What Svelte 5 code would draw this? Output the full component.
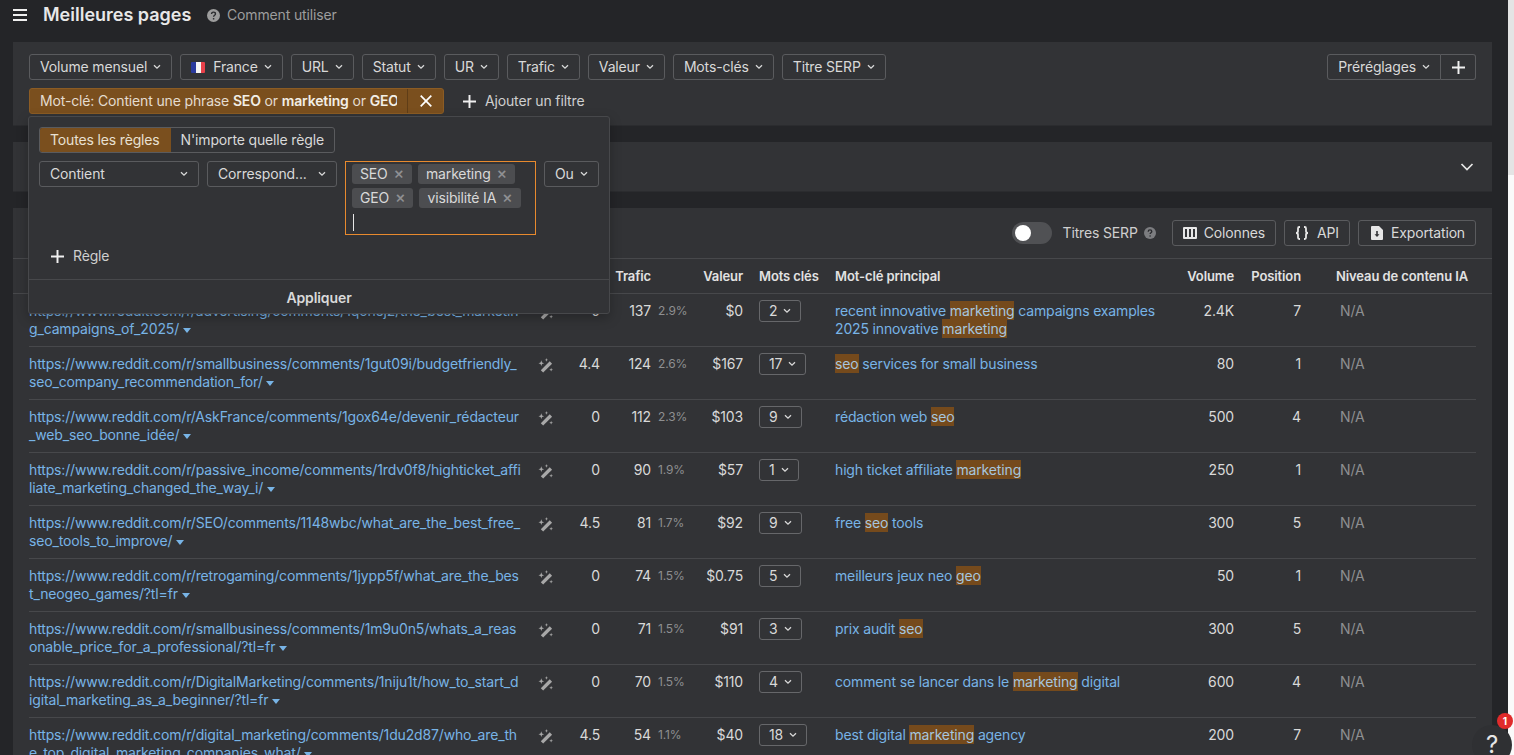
<script>
  const filters = ["Volume mensuel", "France", "URL", "Statut", "UR", "Trafic", "Valeur", "Mots-clés", "Titre SERP"];

  // kw: [text, highlighted] pieces, url lines split the way the page wraps them
  const rows = [
    { url: ["https://www.reddit.com/r/advertising/comments/1qonej2/the_best_marketin", "g_campaigns_of_2025/"], ur: "0", traffic: 137, pct: "2.9%", value: "$0", kws: 2,
      kw: [["recent innovative "], ["marketing", 1], [" campaigns examples 2025 innovative "], ["marketing", 1]], vol: "2.4K", pos: 7 },
    { url: ["https://www.reddit.com/r/smallbusiness/comments/1gut09i/budgetfriendly_", "seo_company_recommendation_for/"], ur: "4.4", traffic: 124, pct: "2.6%", value: "$167", kws: 17,
      kw: [["seo", 1], [" services for small business"]], vol: "80", pos: 1 },
    { url: ["https://www.reddit.com/r/AskFrance/comments/1gox64e/devenir_rédacteur", "_web_seo_bonne_idée/"], ur: "0", traffic: 112, pct: "2.3%", value: "$103", kws: 9,
      kw: [["rédaction web "], ["seo", 1]], vol: "500", pos: 4 },
    { url: ["https://www.reddit.com/r/passive_income/comments/1rdv0f8/highticket_affi", "liate_marketing_changed_the_way_i/"], ur: "0", traffic: 90, pct: "1.9%", value: "$57", kws: 1,
      kw: [["high ticket affiliate "], ["marketing", 1]], vol: "250", pos: 1 },
    { url: ["https://www.reddit.com/r/SEO/comments/1148wbc/what_are_the_best_free_", "seo_tools_to_improve/"], ur: "4.5", traffic: 81, pct: "1.7%", value: "$92", kws: 9,
      kw: [["free "], ["seo", 1], [" tools"]], vol: "300", pos: 5 },
    { url: ["https://www.reddit.com/r/retrogaming/comments/1jypp5f/what_are_the_bes", "t_neogeo_games/?tl=fr"], ur: "0", traffic: 74, pct: "1.5%", value: "$0.75", kws: 5,
      kw: [["meilleurs jeux neo "], ["geo", 1]], vol: "50", pos: 1 },
    { url: ["https://www.reddit.com/r/smallbusiness/comments/1m9u0n5/whats_a_reas", "onable_price_for_a_professional/?tl=fr"], ur: "0", traffic: 71, pct: "1.5%", value: "$91", kws: 3,
      kw: [["prix audit "], ["seo", 1]], vol: "300", pos: 5 },
    { url: ["https://www.reddit.com/r/DigitalMarketing/comments/1niju1t/how_to_start_d", "igital_marketing_as_a_beginner/?tl=fr"], ur: "0", traffic: 70, pct: "1.5%", value: "$110", kws: 4,
      kw: [["comment se lancer dans le "], ["marketing", 1], [" digital"]], vol: "600", pos: 4 },
    { url: ["https://www.reddit.com/r/digital_marketing/comments/1du2d87/who_are_th", "e_top_digital_marketing_companies_what/"], ur: "4.5", traffic: 54, pct: "1.1%", value: "$40", kws: 18,
      kw: [["best digital "], ["marketing", 1], [" agency"]], vol: "200", pos: 7 }
  ];
</script>

{#snippet chev()}
  <svg class="chev" viewBox="0 0 8 6" width="8" height="6"><path d="M1 1.2 4 4.2 7 1.2" fill="none" stroke="currentColor" stroke-width="1.3" /></svg>
{/snippet}

{#snippet plus(size)}
  <svg viewBox="0 0 12 12" width={size} height={size}><path d="M6 0v12M0 6h12" stroke="currentColor" stroke-width="1.8" fill="none" /></svg>
{/snippet}

{#snippet help(size)}
  <svg viewBox="0 0 12 12" width={size} height={size}><circle cx="6" cy="6" r="6" fill="currentColor" /><path d="M4.2 4.7c0-1.100.8-1.800 1.800-1.800s1.800.7 1.800 1.600c0 1.300-1.700 1.300-1.700 2.600" fill="none" stroke="#2a2b2e" stroke-width="1.300" /><circle cx="6.100" cy="9" r=".8" fill="#2a2b2e" /></svg>
{/snippet}

<div class="page">
  <div class="main">
    <header>
      <svg class="burger" viewBox="0 0 14 12" width="14" height="12"><path d="M0 1h14M0 6h14M0 11h14" stroke="#f0f0f0" stroke-width="2" /></svg>
      <h1>Meilleures pages</h1>
      <span class="howto">
        <span class="howto-icon">{@render help(13)}</span>
        Comment utiliser
      </span>
    </header>

    <section class="panel filters">
      <div class="filter-row">
        {#each filters as f}
          <button class="btn">
            {#if f === "France"}
              <span class="flag"><i></i><i></i><i></i></span>
            {/if}
            {f}
            {@render chev()}
          </button>
        {/each}
        <div class="presets">
          <button class="btn left">Préréglages {@render chev()}</button>
          <button class="btn right">{@render plus(13)}</button>
        </div>
      </div>
      <div class="filter-row second">
        <div class="chip">
          <span class="chip-label">Mot-clé: Contient une phrase <b>SEO</b> or <b>marketing</b> or <b>GEO</b> or <b>visibilité IA</b></span>
          <span class="chip-x">
            <svg viewBox="0 0 12 12" width="12" height="12"><path d="M.7.7l10.600 10.600M11.300.7.7 11.300" stroke="#fff" stroke-width="1.700" /></svg>
          </span>
        </div>
        <span class="add">{@render plus(13)} Ajouter un filtre</span>
      </div>

      <div class="popup">
        <div class="tabs">
          <span class="tab on">Toutes les règles</span>
          <span class="tab">N'importe quelle règle</span>
        </div>
        <div class="rule">
          <button class="btn sel contains">Contient {@render chev()}</button>
          <button class="btn sel match">Correspond... {@render chev()}</button>
          <div class="tagbox">
            <span class="tag">SEO <em>×</em></span>
            <span class="tag">marketing <em>×</em></span>
            <span class="tag">GEO <em>×</em></span>
            <span class="tag">visibilité IA <em>×</em></span>
            <span class="tag-input"><span class="caret"></span></span>
          </div>
          <button class="btn sel ou">Ou {@render chev()}</button>
        </div>
        <div class="add-rule">{@render plus(13)} Règle</div>
        <div class="apply">Appliquer</div>
      </div>
    </section>

    <section class="panel collapsed">
      <svg viewBox="0 0 14 8" width="14" height="8"><path d="M1.500 1 7 6.500 12.500 1" fill="none" stroke="#e6e6e6" stroke-width="1.700" /></svg>
    </section>

    <section class="panel results">
      <div class="toolbar">
        <span class="toggle"><i></i></span>
        <span class="serp">Titres SERP</span>
        <span class="serp-help">{@render help(12)}</span>
        <button class="btn tool first">
          <svg viewBox="0 0 14 12" width="14" height="12"><path fill-rule="evenodd" d="M1 0h12a1 1 0 0 1 1 1v10a1 1 0 0 1-1 1H1a1 1 0 0 1-1-1V1a1 1 0 0 1 1-1zm1 2v8h2V2zm4 0v8h2V2zm4 0v8h2V2z" fill="#e6e6e6" /></svg>
          Colonnes
        </button>
        <button class="btn tool">
          <svg viewBox="0 0 14 14" width="14" height="14"><path d="M5 1H4.300C3.300 1 3 1.600 3 2.500v2.800C3 6.300 2.300 7 1 7c1.300 0 2 .7 2 1.700v2.800c0 .9.3 1.500 1.300 1.500H5M9 1h.7c1 0 1.300.6 1.300 1.500v2.800c0 1 .7 1.700 2 1.700-1.300 0-2 .7-2 1.700v2.800c0 .9-.3 1.500-1.300 1.500H9" fill="none" stroke="#e6e6e6" stroke-width="1.800" /></svg>
          API
        </button>
        <button class="btn tool export">
          <svg viewBox="0 0 12 14" width="12" height="14"><path fill-rule="evenodd" d="M1 0h7l4 4v9a1 1 0 0 1-1 1H1a1 1 0 0 1-1-1V1a1 1 0 0 1 1-1zm4.200 5v3.200H3.500L6 11l2.500-2.800H6.800V5z" fill="#e6e6e6" /></svg>
          Exportation
        </button>
      </div>

      <div class="grid head">
        <span>URL</span>
        <span></span>
        <span class="r">UR</span>
        <span class="r">Trafic</span>
        <span></span>
        <span class="r">Valeur</span>
        <span class="kws">Mots clés</span>
        <span>Mot-clé principal</span>
        <span class="r">Volume</span>
        <span class="r">Position</span>
        <span class="ai">Niveau de contenu IA</span>
      </div>

      <div class="rows">
        {#each rows as row}
          <div class="grid row">
            <a class="url" href="#top">
              {row.url[0]}<br />{row.url[1]}
              <svg class="tri" viewBox="0 0 8 5" width="8" height="5"><path d="M0 0h8L4 5z" fill="currentColor" /></svg>
            </a>
            <span class="wand">
              <svg viewBox="0 0 16 16" width="15" height="15">
                <path d="M12.500 3.500 15 6 5.500 15.500 3 13z" fill="#a8a8a8" />
                <path d="M3.500 2.500l.8 2.200 2.200.8-2.200.8-.8 2.200-.8-2.200-2.200-.8 2.200-.8zM9 0l.5 1.500 1.500.5-1.500.5L9 4l-.5-1.500L7 2l1.500-.5zM14 10.500l.5 1.500 1.500.5-1.500.5-.5 1.500-.5-1.500-1.500-.5 1.500-.5z" fill="#a8a8a8" />
              </svg>
            </span>
            <span class="r">{row.ur}</span>
            <span class="r">{row.traffic}</span>
            <span class="pct">{row.pct}</span>
            <span class="r">{row.value}</span>
            <span class="kws"><span class="count">{row.kws} {@render chev()}</span></span>
            <span class="kw">
              {#each row.kw as part}
                {#if part[1]}<mark>{part[0]}</mark>{:else}{part[0]}{/if}
              {/each}
            </span>
            <span class="r">{row.vol}</span>
            <span class="r">{row.pos}</span>
            <span class="na">N/A</span>
          </div>
        {/each}
      </div>
    </section>
  </div>
  <div class="scrollbar"></div>

  <div class="bubble">
    ?
    <span class="badge">1</span>
  </div>
</div>

<style>
  :global(body) {
    margin: 0;
    overflow: hidden;
    background: #242528;
  }
  .page {
    display: flex;
    position: relative;
    height: 755px;
    overflow: hidden;
    font-family: Inter, "Liberation Sans", sans-serif;
    font-size: 14px;
    line-height: 18px;
    letter-spacing: -0.15px;
    color: #d9d9d9;
  }
  .main {
    flex: 1;
    min-width: 0;
    padding: 0 16px 0 13px;
    overflow: hidden;
  }
  .scrollbar {
    width: 6px;
    background: linear-gradient(#e4e4e4 175px, #fafafa 175px);
  }
  header {
    height: 42px;
    box-sizing: border-box;
    display: flex;
    align-items: flex-start;
    padding-top: 6px;
  }
  .burger {
    margin-top: 3px;
    margin-right: 16px;
  }
  h1 {
    margin: 0;
    font-size: 18px;
    font-weight: 600;
    line-height: 18px;
    letter-spacing: 0;
    color: #e8e8e8;
    width: 164px;
  }
  .howto {
    display: inline-flex;
    align-items: center;
    gap: 7px;
    color: #9d9d9d;
  }
  .howto-icon {
    display: inline-flex;
  }
  .panel {
    background: #323336;
    border-bottom: 1px solid #2b2c2f;
    box-sizing: border-box;
  }
  .filters {
    height: 84px;
    padding: 12px 16px 0;
    position: relative;
  }
  .filter-row {
    display: flex;
    gap: 8px;
    align-items: center;
  }
  .second {
    margin-top: 8px;
  }
  .btn {
    height: 26px;
    box-sizing: border-box;
    display: inline-flex;
    align-items: center;
    gap: 6px;
    padding: 0 10px;
    background: transparent;
    border: 1px solid #5a5b5e;
    border-radius: 3px;
    font: inherit;
    letter-spacing: inherit;
    color: #d9d9d9;
    white-space: nowrap;
  }
  .chev {
    flex: none;
  }
  .flag {
    display: inline-flex;
    width: 14px;
    height: 11px;
    margin-right: 2px;
    border-radius: 1px;
    overflow: hidden;
  }
  .flag i {
    flex: 1;
    background: #f5f5f5;
  }
  .flag i:first-child {
    background: #2a3a9e;
  }
  .flag i:last-child {
    background: #e8404a;
  }
  .presets {
    margin-left: auto;
    display: flex;
  }
  .left {
    border-radius: 3px 0 0 3px;
  }
  .right {
    border-radius: 0 3px 3px 0;
    border-left: 0;
    width: 35px;
    justify-content: center;
    color: #f0f0f0;
  }
  .chip {
    width: 415px;
    height: 26px;
    box-sizing: border-box;
    display: flex;
    background: #7a4f1e;
    border: 1px solid #8c5c24;
    border-radius: 3px;
    color: #e4dccf;
  }
  .chip b {
    font-weight: 600;
    color: #f2eee6;
  }
  .chip-label {
    flex: 1;
    min-width: 0;
    margin: 0 10px;
    line-height: 24px;
    white-space: nowrap;
    overflow: hidden;
  }
  .chip-x {
    flex: none;
    width: 35px;
    display: flex;
    align-items: center;
    justify-content: center;
    border-left: 1px solid #5f3d17;
  }
  .add {
    margin-left: 11px;
    display: inline-flex;
    align-items: center;
    gap: 9px;
    color: #cfcfcf;
  }
  .add svg {
    color: #f0f0f0;
  }
  .popup {
    position: absolute;
    left: 15px;
    top: 74px;
    z-index: 5;
    width: 582px;
    height: 198px;
    box-sizing: border-box;
    background: #323336;
    border: 1px solid #47484b;
    border-radius: 3px;
    box-shadow: 0 4px 12px rgba(0, 0, 0, 0.25);
    padding: 10px 10px 0;
  }
  .tabs {
    display: flex;
    width: 296px;
    height: 26px;
    box-sizing: border-box;
    border: 1px solid #5a5b5e;
    border-radius: 3px;
    overflow: hidden;
  }
  .tab {
    padding: 0 10px;
    line-height: 24px;
    white-space: nowrap;
  }
  .tab.on {
    padding-right: 11px;
    background: #7a4f1e;
    color: #e8e0d2;
  }
  .rule {
    display: flex;
    gap: 8px;
    align-items: flex-start;
    margin-top: 8px;
  }
  .sel {
    justify-content: space-between;
  }
  .contains {
    width: 160px;
  }
  .match {
    width: 130px;
  }
  .ou {
    width: 55px;
  }
  .tagbox {
    width: 191px;
    height: 74px;
    box-sizing: border-box;
    border: 1px solid #e88a2e;
    padding: 2px 6px;
    display: flex;
    flex-wrap: wrap;
    align-content: flex-start;
    gap: 4px 6px;
  }
  .tag {
    height: 20px;
    line-height: 20px;
    padding: 0 8px;
    background: #4c4d50;
    border-radius: 3px;
    white-space: nowrap;
  }
  .tag em {
    font-style: normal;
    font-size: 16px;
    line-height: 1;
    font-weight: 500;
    color: #8f9093;
    margin-left: 2px;
  }
  .tag-input {
    flex: 0 0 100%;
    display: flex;
    padding: 2px 0 0 1px;
  }
  .caret {
    width: 1px;
    height: 17px;
    background: #e6e6e6;
  }
  .add-rule {
    position: absolute;
    left: 22px;
    top: 130px;
    display: flex;
    align-items: center;
    gap: 9px;
    color: #cfcfcf;
  }
  .add-rule svg {
    color: #f0f0f0;
  }
  .apply {
    position: absolute;
    left: 0;
    right: 0;
    bottom: 0;
    height: 33px;
    line-height: 35px;
    text-align: center;
    font-weight: 600;
    letter-spacing: -0.1px;
    border-top: 1px solid #47484b;
  }
  .collapsed {
    height: 50px;
    margin-top: 16px;
    display: flex;
    align-items: center;
    justify-content: flex-end;
    padding-right: 18px;
  }
  .results {
    margin-top: 16px;
    height: 560px;
    border-bottom: 0;
  }
  .toolbar {
    height: 51px;
    box-sizing: border-box;
    border-bottom: 1px solid #47484b;
    display: flex;
    align-items: center;
    justify-content: flex-end;
    padding: 0 16px;
    gap: 8px;
  }
  .toggle {
    width: 40px;
    height: 22px;
    border-radius: 11px;
    background: #505154;
    display: flex;
    align-items: center;
    padding-left: 3px;
    box-sizing: border-box;
    margin-right: 3px;
  }
  .toggle i {
    width: 16px;
    height: 16px;
    border-radius: 50%;
    background: #fff;
  }
  .serp {
    color: #cfcfcf;
    margin-right: -2px;
  }
  .serp-help {
    display: inline-flex;
    color: #7c7d80;
  }
  .tool {
    gap: 8px;
  }
  .tool.first {
    margin-left: 8px;
    gap: 7px;
  }
  .tool.export {
    padding-left: 12px;
  }
  .grid {
    display: grid;
    grid-template-columns: 493px 48px 30px 51px 52px 40px 92px 339px 60px 67px 175px;
    margin: 0 16px;
  }
  .head {
    height: 35px;
    margin: 0;
    padding: 0 16px;
    align-items: center;
    font-size: 13px;
    font-weight: 600;
    letter-spacing: -0.1px;
    color: #e2e2e2;
    border-bottom: 1px solid #47484b;
    box-sizing: border-box;
    white-space: nowrap;
  }
  .row {
    height: 53px;
    box-sizing: border-box;
    padding: 8px 0 0;
    border-bottom: 1px solid #47484b;
    align-items: start;
  }
  .r {
    text-align: right;
  }
  .url {
    color: #78b4e6;
    text-decoration: none;
    white-space: nowrap;
  }
  .tri {
    vertical-align: 1px;
  }
  .wand {
    display: flex;
    justify-content: center;
    padding-top: 3px;
    padding-right: 1px;
  }
  .pct {
    padding-left: 7px;
    font-size: 12px;
    color: #8e8f91;
  }
  .kws {
    padding-left: 16px;
  }
  .count {
    display: inline-flex;
    align-items: center;
    gap: 6px;
    height: 22px;
    margin-top: -2px;
    padding: 0 9px;
    box-sizing: border-box;
    border: 1px solid #66676a;
    border-radius: 3px;
  }
  .kw {
    color: #78b4e6;
  }
  mark {
    background: #754a1c;
    color: #a6c6df;
    padding: 1px 0;
  }
  .ai {
    padding-left: 35px;
  }
  .na {
    padding-left: 39px;
    color: #8e8f91;
  }
  .bubble {
    position: absolute;
    left: 1472px;
    top: 725px;
    width: 40px;
    height: 40px;
    border-radius: 50%;
    background: #2f3033;
    display: flex;
    align-items: center;
    justify-content: center;
    font-size: 24px;
    color: #e6e6e6;
  }
  .badge {
    position: absolute;
    top: -12px;
    right: -1px;
    width: 16px;
    height: 16px;
    border-radius: 50%;
    background: #e02b2b;
    color: #fff;
    font-size: 10px;
    font-weight: 700;
    line-height: 16px;
    text-align: center;
    letter-spacing: 0;
  }
</style>
